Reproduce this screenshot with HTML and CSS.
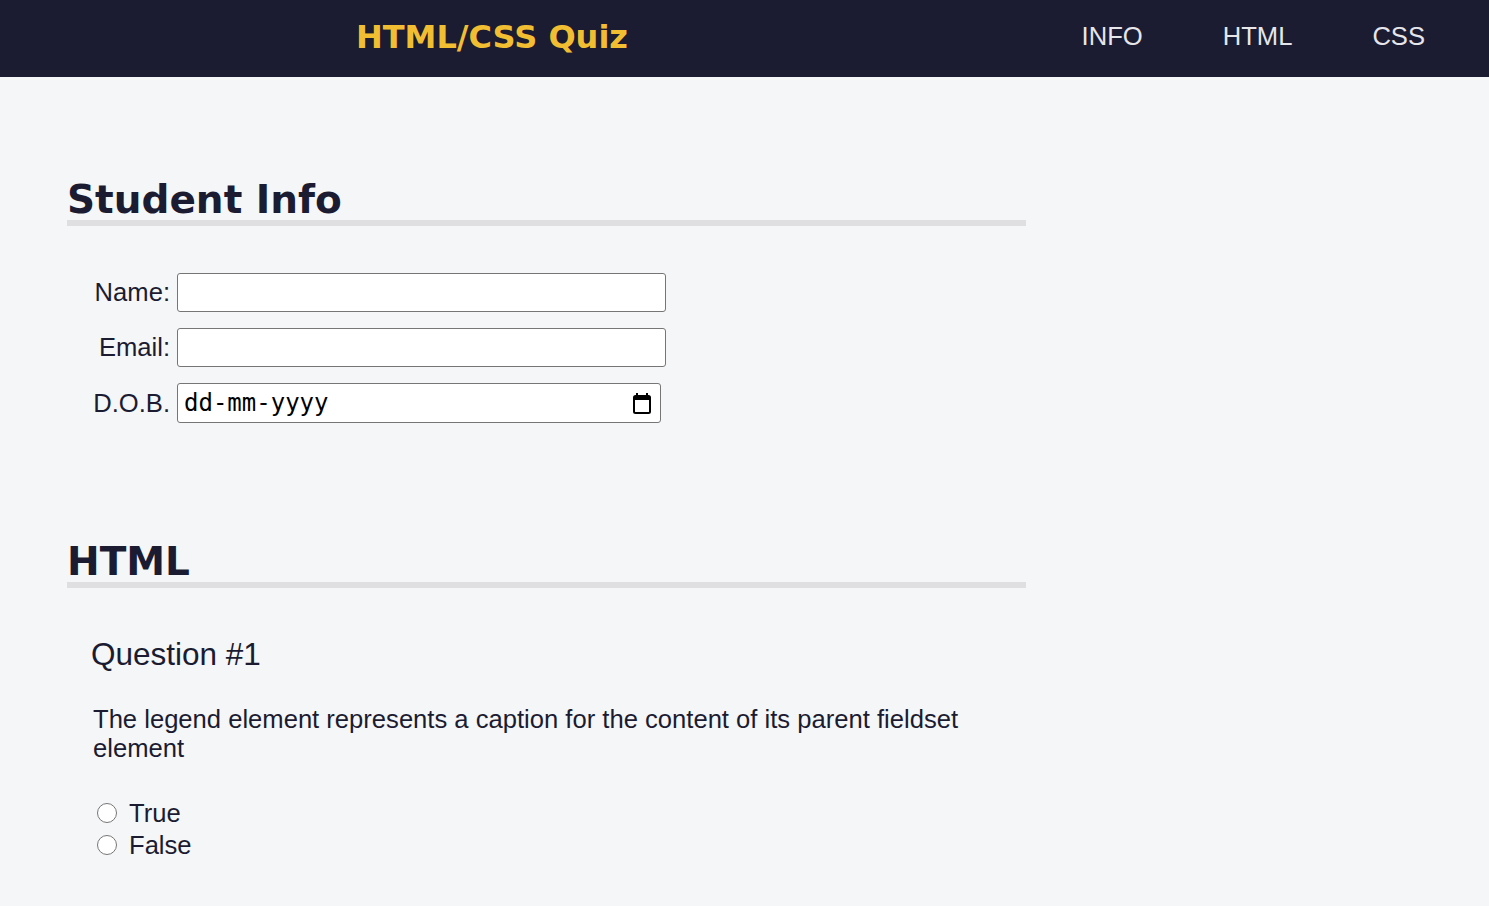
FILE: index.html
```html
<!DOCTYPE html>
<html lang="en">
<head>
<meta charset="utf-8">
<title>HTML/CSS Quiz</title>
<link rel="stylesheet" href="styles.css">
</head>
<body>
<header class="topbar">
  <div class="brand">HTML/CSS Quiz</div>
  <nav class="nav">
    <a class="nav-link" href="#info">INFO</a>
    <a class="nav-link" href="#html">HTML</a>
    <a class="nav-link" href="#css">CSS</a>
  </nav>
</header>
<main class="main">
  <section class="section section-info" id="info">
    <h2 class="section-title">Student Info</h2>
    <div class="info-grid">
      <label class="info-label" for="name">Name:</label>
      <input class="info-input" type="text" id="name">
      <label class="info-label" for="email">Email:</label>
      <input class="info-input" type="email" id="email">
      <label class="info-label" for="dob">D.O.B.</label>
      <div class="date-box">
        <input class="date-field" type="text" id="dob" placeholder="dd-mm-yyyy">
        <svg class="date-icon" width="18" height="21" viewBox="0 0 18 21" aria-hidden="true">
          <rect x="3" y="0" width="2" height="4" fill="#000"/>
          <rect x="13" y="0" width="2" height="4" fill="#000"/>
          <rect x="1" y="3" width="16" height="17" rx="1.5" fill="none" stroke="#000" stroke-width="2"/>
          <rect x="1" y="3" width="16" height="4" fill="#000"/>
        </svg>
      </div>
    </div>
  </section>
  <section class="section section-html" id="html">
    <h2 class="section-title">HTML</h2>
    <div class="question">
      <h3 class="question-title">Question #1</h3>
      <p class="question-text">The legend element represents a caption for the content of its parent fieldset element</p>
      <ul class="answers">
        <li class="answer"><label class="answer-label"><input class="radio" type="radio" name="q1" value="true"><span>True</span></label></li>
        <li class="answer"><label class="answer-label"><input class="radio" type="radio" name="q1" value="false"><span>False</span></label></li>
      </ul>
    </div>
  </section>
</main>
</body>
</html>
```

FILE: styles.css
```css
* { box-sizing: border-box; }
html, body { margin: 0; padding: 0; }
body {
  background: #f5f6f7;
  color: #1b1b32;
  font-family: "Liberation Sans", Arial, sans-serif;
  font-size: 25.6px;
}
.topbar {
  height: 77px;
  background: #1b1b32;
  display: flex;
  align-items: center;
  padding-left: 356px;
  padding-right: 64px;
}
.brand {
  font-family: "DejaVu Sans", Verdana, sans-serif;
  font-weight: bold;
  font-size: 32px;
  color: #f1be32;
  padding-bottom: 3px;
}
.nav {
  margin-left: auto;
  display: flex;
  gap: 80px;
  padding-bottom: 4px;
}
.nav-link {
  color: #e6e6ea;
  text-decoration: none;
  font-size: 25.6px;
}
.main {
  padding: 0 0 0 67px;
  width: 1026px;
}
.section-title {
  font-family: "DejaVu Sans", Verdana, sans-serif;
  font-weight: bold;
  font-size: 39px;
  line-height: 1;
  margin: 0;
  padding-bottom: 1px;
  border-bottom: 6px solid #dfdfe2;
  color: #1b1b32;
}
.section-info { padding-top: 103px; }
.section-html { padding-top: 119px; }
.info-grid {
  display: grid;
  grid-template-columns: 103px auto;
  column-gap: 7px;
  row-gap: 16px;
  align-items: center;
  justify-items: start;
  margin-top: 47px;
}
.info-label {
  justify-self: end;
  font-size: 25.6px;
}
.info-input {
  width: 489px;
  height: 39px;
  border: 1px solid #767676;
  border-radius: 3px;
  background: #fff;
  font-family: "Liberation Sans", Arial, sans-serif;
  font-size: 24px;
  padding: 0 6px;
}
.date-box {
  width: 484px;
  height: 40px;
  border: 1px solid #767676;
  border-radius: 3px;
  background: #fff;
  display: flex;
  align-items: center;
  padding: 0 9px 0 6px;
}
.date-field {
  flex: 1;
  min-width: 0;
  border: none;
  outline: none;
  background: transparent;
  padding: 0;
  font-family: "DejaVu Sans Mono", "Liberation Mono", monospace;
  font-size: 24px;
  color: #000;
}
.date-field::placeholder { color: #000; opacity: 1; }
.date-icon { flex: none; display: block; }
.question { padding-left: 24px; padding-top: 48px; }
.question-title {
  font-weight: normal;
  font-size: 31.5px;
  margin: 0;
  line-height: 1.2;
}
.question-text {
  font-size: 25.6px;
  line-height: 29px;
  margin: 31px 0 0 2px;
  width: 910px;
}
.answers {
  list-style: none;
  margin: 34px 0 0 0;
  padding: 0;
}
.answer { line-height: 32px; }
.answer-label {
  display: flex;
  align-items: center;
  gap: 12px;
  padding-left: 6px;
}
.radio {
  width: 20px;
  height: 20px;
  margin: 0;
}
```
